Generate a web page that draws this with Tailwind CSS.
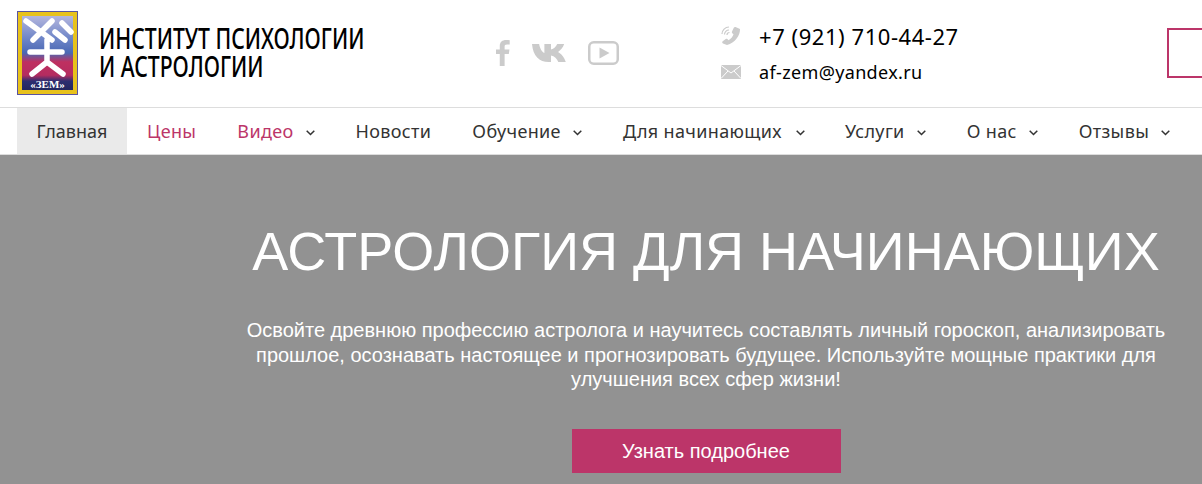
<!DOCTYPE html>
<html lang="ru">
<head>
<meta charset="utf-8">
<title>Институт психологии и астрологии</title>
<script src="https://cdn.jsdelivr.net/npm/@tailwindcss/browser@4"></script>
</head>
<body class="h-[484px] w-[1202px] overflow-hidden bg-white font-['Noto_Sans',sans-serif]">

  <!-- header -->
  <header class="flex h-[107px] items-start overflow-hidden pl-[17px]">
    <svg class="mt-[11px] shrink-0" width="61" height="84" viewBox="0 0 61 84">
      <defs>
        <linearGradient id="logo-bg" x1="0" y1="0" x2="0" y2="1">
          <stop offset="0" stop-color="#b4b6de"/>
          <stop offset="0.3" stop-color="#6f86c8"/>
          <stop offset="0.5" stop-color="#4a68b4"/>
          <stop offset="0.62" stop-color="#bf3060"/>
          <stop offset="0.8" stop-color="#b52c60"/>
          <stop offset="0.88" stop-color="#2c2e70"/>
          <stop offset="1" stop-color="#23265f"/>
        </linearGradient>
      </defs>
      <rect width="61" height="84" fill="#5a54a0"/>
      <rect x="1" y="1" width="59" height="82" fill="#e8c21c"/>
      <rect x="5" y="5" width="51" height="74" fill="url(#logo-bg)"/>
      <g fill="none" stroke="#fff" stroke-width="5.500" stroke-linecap="round" stroke-linejoin="round">
        <path d="M9 10l26 19M35 10L16 29M45 12l9 9M38 21l10 8M13 41h32M30 29v22M30 51L15 63M30 51l16 12"/>
      </g>
      <text x="30.500" y="77" text-anchor="middle" fill="#fff" font-family="'Liberation Serif',serif" font-size="11" font-weight="700">«ЗЕМ»</text>
    </svg>

    <div class="ml-[21px] mt-[24px] w-[300px] shrink-0 origin-left scale-x-[0.757] text-[28px] leading-[28px] font-medium whitespace-nowrap text-black uppercase">
      Институт психологии<br>и астрологии
    </div>

    <div class="ml-[97px] mt-[40px] flex shrink-0 items-center gap-[22px] text-[#cbcbcb]">
      <svg width="14" height="26" viewBox="0 0 13 26" preserveAspectRatio="none" fill="currentColor"><path d="M3.500 26V14H0V9.500h3.500V6c0-4 2.400-6 5.800-6 1.600 0 3 .1 3.400.2v4.200h-2.400c-1.900 0-2.300.9-2.300 2.200v2.900h4.500l-.6 4.500H8V26z"/></svg>
      <svg width="34" height="20" viewBox="2 0 31 20" preserveAspectRatio="none" fill="currentColor"><path d="M0 1h6.500c.6 4 2.500 8 4.800 9V1h6v5.500C20 6 22 3.500 23 1h6.300c-.8 3.500-3.600 6.500-5.500 8 2.300 1.500 5.400 4.500 7 10h-6.800c-1.200-3.300-3.500-6-6.700-6.500V19h-2C6.500 19 1 13 0 1z" transform="translate(2 0)"/></svg>
      <svg width="31" height="24" viewBox="0 0 31 24" fill="none"><rect x="1.250" y="1.250" width="28.500" height="21.500" rx="4.500" stroke="currentColor" stroke-width="2.500"/><path d="M11.500 6.500l10 5.500-10 5.500z" fill="currentColor"/></svg>
    </div>

    <div class="ml-[102px] mt-[21px] flex w-[270px] shrink-0 flex-col whitespace-nowrap">
      <div class="flex h-[30px] items-center">
        <svg width="20" height="20" viewBox="0 0 20 20" fill="#cbcbcb"><path d="M14.500 1l4.500 2c.4 6-5 14-13 16l-4-1.500c-1-.5-1-1.500-.3-2.200l3-2.300c.5-.4 1.100-.3 1.600.1l1.300 1.100c2.200-1.200 4.200-3.800 4.900-6l-1.200-.9c-.5-.4-.6-1-.4-1.500l1.900-4.100c.3-.6 1-.9 1.700-.7z"/><path d="M1 8a7 7 0 0 1 7-7M3.500 8.500a4.500 4.500 0 0 1 4.500-4.500M6 9a2.500 2.500 0 0 1 2.500-2.500" fill="none" stroke="#cbcbcb" stroke-width="1.200"/></svg>
        <span class="ml-[18px] text-[22px] leading-[30px] tracking-[0.55px] text-black">+7 (921) 710-44-27</span>
      </div>
      <div class="mt-[9px] flex h-[24px] items-center">
        <svg width="20" height="14" viewBox="0 0 20 14"><rect width="20" height="14" fill="#cbcbcb"/><path d="M0 .5l10 7.500L20 .5M0 13.500l7-7.500M20 13.500l-7-7.500" fill="none" stroke="#fff" stroke-width="1"/></svg>
        <span class="ml-[18px] text-[18px] leading-[24px] tracking-[0.35px] text-black">af-zem@yandex.ru</span>
      </div>
    </div>

    <div class="mt-[28px] ml-[176px] h-[50px] w-[120px] shrink-0 border-2 border-[#bc3569]"></div>
  </header>

  <!-- nav -->
  <nav class="flex h-[48px] items-stretch border-y border-[#dddddd] pl-[17px] text-[18px] tracking-[0.35px] text-[#333333]">
    <a class="flex w-[110px] items-center justify-center bg-[#eaeaea] tracking-normal">Главная</a>
    <a class="ml-[20px] flex items-center text-[#bc3569]">Цены</a>
    <a class="ml-[41px] flex items-center text-[#bc3569]">Видео<svg class="ml-[12px] mt-[3px]" width="9" height="6" viewBox="0 0 9 6" fill="none" stroke="#333" stroke-width="1.500"><path d="M.7.700l3.800 3.800L8.300.700"/></svg></a>
    <a class="ml-[41px] flex items-center">Новости</a>
    <a class="ml-[41px] flex items-center">Обучение<svg class="ml-[12px] mt-[3px]" width="9" height="6" viewBox="0 0 9 6" fill="none" stroke="#333" stroke-width="1.500"><path d="M.7.700l3.800 3.800L8.300.700"/></svg></a>
    <a class="ml-[41px] flex items-center">Для начинающих<svg class="ml-[14px] mt-[3px]" width="9" height="6" viewBox="0 0 9 6" fill="none" stroke="#333" stroke-width="1.500"><path d="M.7.700l3.800 3.800L8.300.700"/></svg></a>
    <a class="ml-[40px] flex items-center">Услуги<svg class="ml-[12px] mt-[3px]" width="9" height="6" viewBox="0 0 9 6" fill="none" stroke="#333" stroke-width="1.500"><path d="M.7.700l3.800 3.800L8.300.700"/></svg></a>
    <a class="ml-[41px] flex items-center">О нас<svg class="ml-[12px] mt-[3px]" width="9" height="6" viewBox="0 0 9 6" fill="none" stroke="#333" stroke-width="1.500"><path d="M.7.700l3.800 3.800L8.300.700"/></svg></a>
    <a class="ml-[41px] flex items-center">Отзывы<svg class="ml-[12px] mt-[3px]" width="9" height="6" viewBox="0 0 9 6" fill="none" stroke="#333" stroke-width="1.500"><path d="M.7.700l3.800 3.800L8.300.700"/></svg></a>
  </nav>

  <!-- hero -->
  <section class="flex h-[329px] flex-col items-center bg-[#929292] pl-[210px] font-['Liberation_Sans',sans-serif] text-white">
    <h1 class="mt-[66px] text-[54px] leading-[60px] whitespace-nowrap uppercase">Астрология для начинающих</h1>
    <p class="mt-[37px] w-[930px] text-center text-[20px] leading-[24.5px]">Освойте древнюю профессию астролога и научитесь составлять личный гороскоп, анализировать прошлое, осознавать настоящее и прогнозировать будущее. Используйте мощные практики для улучшения всех сфер жизни!</p>
    <a class="mt-[37.5px] flex h-[44px] w-[269px] items-center justify-center bg-[#bc3569] text-[20px]">Узнать подробнее</a>
  </section>
</body>
</html>
